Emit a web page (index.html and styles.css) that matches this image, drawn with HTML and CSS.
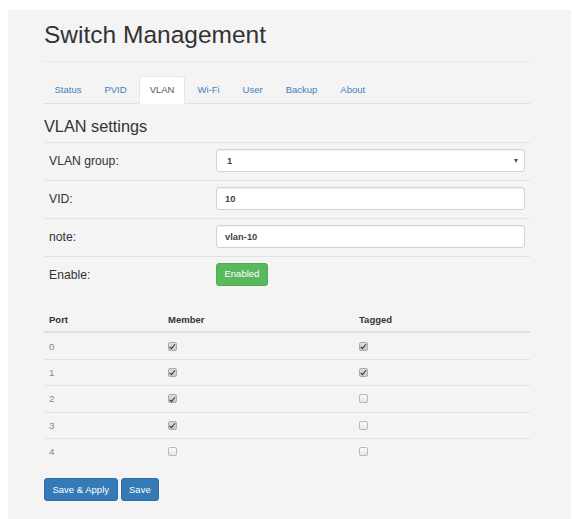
FILE: index.html
```html
<!DOCTYPE html>
<html lang="en">
<head>
<meta charset="utf-8">
<title>Switch Management</title>
<link rel="stylesheet" href="styles.css">
</head>
<body>
<div class="page">
  <h1 class="title">Switch Management</h1>
  <hr class="rule">

  <ul class="tabs">
    <li><a href="#">Status</a></li>
    <li><a href="#">PVID</a></li>
    <li class="active"><a href="#">VLAN</a></li>
    <li><a href="#">Wi-Fi</a></li>
    <li><a href="#">User</a></li>
    <li><a href="#">Backup</a></li>
    <li><a href="#">About</a></li>
  </ul>

  <h3 class="section-title">VLAN settings</h3>

  <div class="form">
    <div class="form-row">
      <div class="form-label">VLAN group:</div>
      <div class="form-field">
        <div class="control select"><span>1</span><span class="caret"></span></div>
      </div>
    </div>
    <div class="form-row">
      <div class="form-label">VID:</div>
      <div class="form-field"><div class="control">10</div></div>
    </div>
    <div class="form-row">
      <div class="form-label">note:</div>
      <div class="form-field"><div class="control">vlan-10</div></div>
    </div>
    <div class="form-row">
      <div class="form-label">Enable:</div>
      <div class="form-field"><button class="btn btn-success">Enabled</button></div>
    </div>
  </div>

  <div class="ports">
    <div class="ports-head">
      <div>Port</div><div>Member</div><div>Tagged</div>
    </div>
    <div class="ports-row">
      <div class="port">0</div><div><span class="cb on"></span></div><div><span class="cb on"></span></div>
    </div>
    <div class="ports-row">
      <div class="port">1</div><div><span class="cb on"></span></div><div><span class="cb on"></span></div>
    </div>
    <div class="ports-row">
      <div class="port">2</div><div><span class="cb on"></span></div><div><span class="cb"></span></div>
    </div>
    <div class="ports-row">
      <div class="port">3</div><div><span class="cb on"></span></div><div><span class="cb"></span></div>
    </div>
    <div class="ports-row">
      <div class="port">4</div><div><span class="cb"></span></div><div><span class="cb"></span></div>
    </div>
  </div>

  <div class="actions">
    <button class="btn btn-primary">Save &amp; Apply</button>
    <button class="btn btn-primary">Save</button>
  </div>
</div>
</body>
</html>
```

FILE: styles.css
```css
html, body {
  margin: 0;
  background: #fff;
}

body {
  padding: 10px 1px 0 8px;
  font-family: "Liberation Sans", Arial, Helvetica, sans-serif;
  color: #333;
}

.page {
  background: #f4f4f4;
  height: 509px;
  box-sizing: border-box;
  padding: 10px 41px 0 36px;
}

.title {
  margin: 0;
  font-size: 24.5px;
  line-height: 30px;
  font-weight: normal;
  color: #333;
}

.rule {
  margin: 11px 0 0;
  border: 0;
  border-top: 1px solid #e8e8e8;
  height: 0;
}

/* nav tabs */
.tabs {
  list-style: none;
  margin: 14px 0 0;
  padding: 0;
  display: flex;
  border-bottom: 1px solid #e1e1e1;
}

.tabs li {
  margin: 0 2px -1px 0;
}

.tabs a {
  display: block;
  padding: 6px 9.5px;
  font-size: 9.5px;
  line-height: 14px;
  color: #3d7fbd;
  text-decoration: none;
  border: 1px solid transparent;
  border-radius: 3px 3px 0 0;
}

.tabs .active a {
  background: #fff;
  color: #555;
  border-color: #e6e6e6 #e6e6e6 transparent;
}

.section-title {
  margin: 12px 0 6px;
  font-size: 16.3px;
  line-height: 20px;
  font-weight: normal;
  color: #333;
}

/* settings form */
.form-row {
  display: grid;
  grid-template-columns: 167px 1fr;
  align-items: center;
  height: 38px;
  box-sizing: border-box;
  border-top: 1px solid #e2e2e2;
  padding: 6px 0 8px;
}

.form-label {
  padding: 0 5px;
  font-size: 12.2px;
  color: #333;
}

.form-field {
  padding: 0 5px;
}

.control {
  height: 23px;
  box-sizing: border-box;
  background: #fff;
  border: 1px solid #d2d2d2;
  border-radius: 3px;
  box-shadow: inset 0 1px 1px rgba(0, 0, 0, 0.06);
  padding: 0 8px;
  font-size: 9.4px;
  font-weight: bold;
  color: #444;
  line-height: 21px;
}

.select {
  display: flex;
  justify-content: space-between;
  align-items: center;
  padding: 0 6px 0 10px;
}

.caret {
  width: 0;
  height: 0;
  border-left: 2.5px solid transparent;
  border-right: 2.5px solid transparent;
  border-top: 4px solid #555;
}

/* buttons */
.btn {
  font-family: inherit;
  font-size: 9.5px;
  line-height: 13.5px;
  padding: 4px 7.5px;
  border-radius: 3px;
  border: 1px solid transparent;
  color: #fff;
  cursor: pointer;
  margin: 0;
}

.btn-success {
  background: #5cb85c;
  border-color: #4cae4c;
  line-height: 12.5px;
}

.btn-primary {
  background: #337ab7;
  border-color: #2e6da4;
}

/* port table */
.ports {
  margin-top: 13px;
  font-size: 9.5px;
}

.ports-head,
.ports-row {
  display: grid;
  grid-template-columns: 119px 191px 1fr;
  align-items: center;
}

.ports-head > div,
.ports-row > div {
  padding: 0 5px;
}

.ports-head {
  padding: 6px 0 4px;
  line-height: 14px;
  font-weight: bold;
  color: #333;
  border-bottom: 2px solid #e0e0e0;
}

.ports-row {
  height: 26.3px;
  box-sizing: border-box;
  border-top: 1px solid #e2e2e2;
}

.ports-row:first-of-type,
.ports-head + .ports-row {
  height: 26px;
  border-top: 0;
}

.port {
  color: #888;
  font-size: 9.8px;
}

.cb {
  display: block;
  position: relative;
  width: 9px;
  height: 9px;
  box-sizing: border-box;
  border: 1px solid #b9b9b9;
  border-radius: 2px;
  background: linear-gradient(#fbfbfb, #e6e6e6);
}

.cb.on {
  background: linear-gradient(#dcdcdc, #c9c9c9);
  border-color: #aaa;
}

.cb.on::after {
  content: "";
  position: absolute;
  left: 2.3px;
  top: 0.3px;
  width: 2px;
  height: 4.5px;
  border-right: 1.6px solid #2a2a2a;
  border-bottom: 1.6px solid #2a2a2a;
  transform: rotate(40deg);
}

.actions {
  display: flex;
  gap: 3px;
  margin-top: 13.5px;
}
```
